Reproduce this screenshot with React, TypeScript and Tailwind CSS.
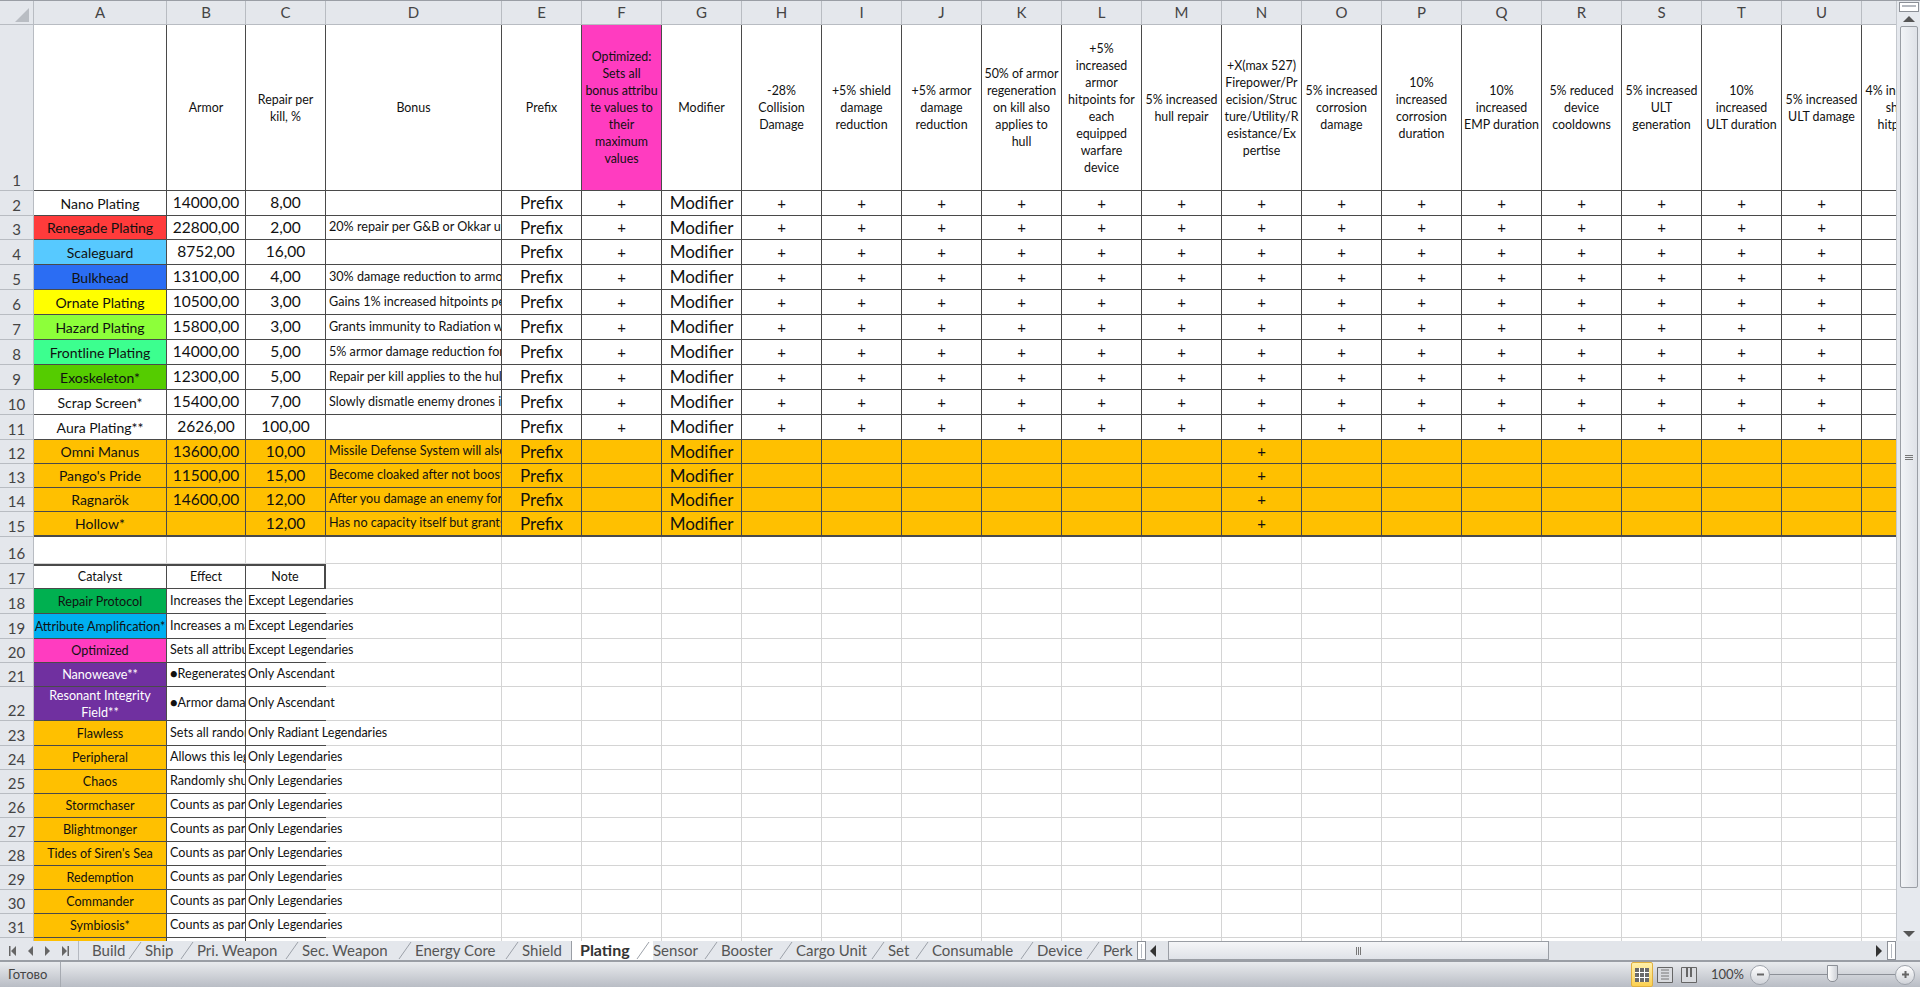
import { ReactNode } from "react";

const HEADER_LETTERS = "ABCDEFGHIJKLMNOPQRSTUV".split("");

const TOP_HEADERS = [
  "",
  "Armor",
  "Repair per\nkill, %",
  "Bonus",
  "Prefix",
  "Optimized:\nSets all\nbonus attribu\nte values to\ntheir\nmaximum\nvalues",
  "Modifier",
  "-28%\nCollision\nDamage",
  "+5% shield\ndamage\nreduction",
  "+5% armor\ndamage\nreduction",
  "50% of armor\nregeneration\non kill also\napplies to\nhull",
  "+5%\nincreased\narmor\nhitpoints for\neach\nequipped\nwarfare\ndevice",
  "5% increased\nhull repair",
  "+X(max 527)\nFirepower/Pr\necision/Struc\nture/Utility/R\nesistance/Ex\npertise",
  "5% increased\ncorrosion\ndamage",
  "10%\nincreased\ncorrosion\nduration",
  "10%\nincreased\nEMP duration",
  "5% reduced\ndevice\ncooldowns",
  "5% increased\nULT\ngeneration",
  "10%\nincreased\nULT duration",
  "5% increased\nULT damage",
  "4% increased\nshield\nhitpoints",
];

const PLATINGS = [
  { name: "Nano Plating", armor: "14000,00", repair: "8,00", bonus: "", fill: "bg-white" },
  { name: "Renegade Plating", armor: "22800,00", repair: "2,00", bonus: "20% repair per G&B or Okkar units nearby", fill: "bg-[#ff3b3b]" },
  { name: "Scaleguard", armor: "8752,00", repair: "16,00", bonus: "", fill: "bg-[#57c9ff]" },
  { name: "Bulkhead", armor: "13100,00", repair: "4,00", bonus: "30% damage reduction to armor while", fill: "bg-[#2b6df3]" },
  { name: "Ornate Plating", armor: "10500,00", repair: "3,00", bonus: "Gains 1% increased hitpoints per kill", fill: "bg-[#ffff00]" },
  { name: "Hazard Plating", armor: "15800,00", repair: "3,00", bonus: "Grants immunity to Radiation while", fill: "bg-[#8dff3a]" },
  { name: "Frontline Plating", armor: "14000,00", repair: "5,00", bonus: "5% armor damage reduction for each", fill: "bg-[#3cff8f]" },
  { name: "Exoskeleton*", armor: "12300,00", repair: "5,00", bonus: "Repair per kill applies to the hull", fill: "bg-[#55cc00]" },
  { name: "Scrap Screen*", armor: "15400,00", repair: "7,00", bonus: "Slowly dismatle enemy drones in range", fill: "bg-white" },
  { name: "Aura Plating**", armor: "2626,00", repair: "100,00", bonus: "", fill: "bg-white" },
];

const LEGENDARIES = [
  { name: "Omni Manus", armor: "13600,00", repair: "10,00", bonus: "Missile Defense System will also fire" },
  { name: "Pango's Pride", armor: "11500,00", repair: "15,00", bonus: "Become cloaked after not boosting for" },
  { name: "Ragnarök", armor: "14600,00", repair: "12,00", bonus: "After you damage an enemy for the" },
  { name: "Hollow*", armor: "", repair: "12,00", bonus: "Has no capacity itself but grants" },
];

const CATALYSTS = [
  { name: "Repair Protocol", effect: "Increases the repair", note: "Except Legendaries", fill: "bg-[#00b050]", row: 18 },
  { name: "Attribute Amplification*", effect: "Increases a main", note: "Except Legendaries", fill: "bg-[#00b0f0]", row: 19 },
  { name: "Optimized", effect: "Sets all attributes", note: "Except Legendaries", fill: "bg-[#ff3cc0]", row: 20 },
  { name: "Nanoweave**", effect: "●Regenerates hull", note: "Only Ascendant", fill: "bg-[#7030a0] text-white", row: 21 },
  { name: "Resonant Integrity\nField**", effect: "●Armor damage", note: "Only Ascendant", fill: "bg-[#7030a0] text-white", row: 22 },
  { name: "Flawless", effect: "Sets all random", note: "Only Radiant Legendaries", fill: "bg-[#ffc000]", row: 23 },
  { name: "Peripheral", effect: "Allows this legendary", note: "Only Legendaries", fill: "bg-[#ffc000]", row: 24 },
  { name: "Chaos", effect: "Randomly shuffles", note: "Only Legendaries", fill: "bg-[#ffc000]", row: 25 },
  { name: "Stormchaser", effect: "Counts as part", note: "Only Legendaries", fill: "bg-[#ffc000]", row: 26 },
  { name: "Blightmonger", effect: "Counts as part", note: "Only Legendaries", fill: "bg-[#ffc000]", row: 27 },
  { name: "Tides of Siren's Sea", effect: "Counts as part", note: "Only Legendaries", fill: "bg-[#ffc000]", row: 28 },
  { name: "Redemption", effect: "Counts as part", note: "Only Legendaries", fill: "bg-[#ffc000]", row: 29 },
  { name: "Commander", effect: "Counts as part", note: "Only Legendaries", fill: "bg-[#ffc000]", row: 30 },
  { name: "Symbiosis*", effect: "Counts as part", note: "Only Legendaries", fill: "bg-[#ffc000]", row: 31 },
  { name: "", effect: "", note: "", fill: "bg-[#ffc000]", row: 32 },
];

const TABS = [
  { label: "Build", width: "w-[53px]" },
  { label: "Ship", width: "w-[52px]" },
  { label: "Pri. Weapon", width: "w-[105px]" },
  { label: "Sec. Weapon", width: "w-[113px]" },
  { label: "Energy Core", width: "w-[107px]" },
  { label: "Shield", width: "w-[49px]", noSlash: true },
  { label: "Plating", width: "w-[82px]", active: true },
  { label: "Sensor", width: "w-[68px]" },
  { label: "Booster", width: "w-[75px]" },
  { label: "Cargo Unit", width: "w-[92px]" },
  { label: "Set", width: "w-[44px]" },
  { label: "Consumable", width: "w-[105px]" },
  { label: "Device", width: "w-[66px]" },
  { label: "Perk", width: "w-[34px]", noSlash: true },
];

const DARK = "border-r border-b border-[#4a4a4a]";
const LIGHT = "border-r border-b border-[#d4d4d4]";
const CENTER = "flex items-center justify-center whitespace-pre overflow-hidden";

function RowHeader({ n }: { n: number }) {
  return (
    <div className="flex items-end justify-center bg-[#e4e7ec] border-r border-b border-[#b8bcc2] text-[15px] leading-[20px] text-[#444]">
      {n}
    </div>
  );
}

function Blank({ count }: { count: number }) {
  return (
    <>
      {Array.from({ length: count }, (_, i) => (
        <div key={i} className={LIGHT} />
      ))}
    </>
  );
}

function Cell({ className, children }: { className?: string; children?: ReactNode }) {
  return <div className={`${CENTER} ${DARK} ${className ?? ""}`}>{children}</div>;
}

function DataRow({
  n,
  name,
  armor,
  repair,
  bonus,
  fill,
  legendary,
  last,
}: {
  n: number;
  name: string;
  armor: string;
  repair: string;
  bonus: string;
  fill: string;
  legendary?: boolean;
  last?: boolean;
}) {
  const bg = legendary ? "bg-[#ffc000]" : "bg-white";
  const edge = last ? "border-b-2 border-b-[#4a4a4a]" : "";
  return (
    <>
      <RowHeader n={n} />
      <Cell className={`${fill} ${edge} text-[14px]`}>{name}</Cell>
      <Cell className={`${bg} ${edge} text-[15.5px]`}>{armor}</Cell>
      <Cell className={`${bg} ${edge} text-[15.5px]`}>{repair}</Cell>
      <div className={`${DARK} ${bg} ${edge} flex items-center overflow-hidden whitespace-nowrap pl-[3px] text-[12.6px]`}>{bonus}</div>
      <Cell className={`${bg} ${edge} text-[17px]`}>Prefix</Cell>
      {HEADER_LETTERS.slice(5).map((letter) => {
        const isModifier = letter === "G";
        const showPlus = legendary ? letter === "N" : letter !== "V";
        return (
          <Cell key={letter} className={`${bg} ${edge} ${isModifier ? "text-[17px]" : "text-[15px]"}`}>
            {isModifier ? "Modifier" : showPlus ? "+" : ""}
          </Cell>
        );
      })}
    </>
  );
}

function NavArrow({ d }: { d: string }) {
  return (
    <svg width="9" height="10" viewBox="0 0 9 10" className="text-[#666]">
      <path d={d} fill="currentColor" />
    </svg>
  );
}

function ZoomButton({ d }: { d: string }) {
  return (
    <div className="flex h-[20px] w-[20px] items-center justify-center rounded-full border border-[#9ea3ab] bg-gradient-to-b from-white to-[#d0d3d9]">
      <svg width="11" height="11" viewBox="0 0 11 11">
        <path d={d} stroke="#666" strokeWidth="2" fill="none" />
      </svg>
    </div>
  );
}

export default function App() {
  return (
    <div className="flex h-[987px] w-[1920px] flex-col overflow-hidden bg-white font-['Lato','Open_Sans',sans-serif] text-[#111]">
      <div className="flex h-[941px] border-t border-[#9a9ea5]">
        <div className="relative flex-1 overflow-hidden">
          <div className="grid w-max grid-cols-[34px_133px_79px_80px_176px_80px_repeat(17,80px)] grid-rows-[24px_166px_25px_24px_25px_25px_25px_25px_25px_25px_25px_25px_24px_24px_24px_25px_27px_25px_25px_25px_24px_24px_34px_25px_24px_24px_24px_24px_24px_24px_24px_24px_24px]">
            {/* column headings */}
            <div className="relative bg-[#e4e7ec] border-r border-b border-[#b8bcc2]">
              <div className="absolute bottom-[2px] right-[4px] h-0 w-0 border-b-[14px] border-l-[14px] border-b-[#b9bdc3] border-l-transparent" />
            </div>
            {HEADER_LETTERS.map((letter) => (
              <div key={letter} className="flex items-center justify-center bg-[#e4e7ec] border-r border-b border-[#b8bcc2] text-[15px] text-[#444]">
                {letter}
              </div>
            ))}

            {/* row 1 */}
            <RowHeader n={1} />
            {TOP_HEADERS.map((text, i) => (
              <div
                key={i}
                className={`flex items-center justify-center overflow-hidden whitespace-pre text-center text-[12.4px] leading-[17px] ${DARK} ${i === 5 ? "bg-[#ff3cc0]" : ""}`}
              >
                {text}
              </div>
            ))}

            {/* platings */}
            {PLATINGS.map((p, i) => (
              <DataRow key={p.name} n={i + 2} {...p} />
            ))}
            {LEGENDARIES.map((p, i) => (
              <DataRow key={p.name} n={i + 12} {...p} fill="bg-[#ffc000]" legendary last={i === 3} />
            ))}

            {/* row 16 */}
            <RowHeader n={16} />
            <Blank count={22} />

            {/* row 17 */}
            <RowHeader n={17} />
            <Cell className="border-t-2 border-t-[#4a4a4a] text-[12.5px]">Catalyst</Cell>
            <Cell className="border-t-2 border-t-[#4a4a4a] text-[12.5px]">Effect</Cell>
            <Cell className="border-t-2 border-r-2 border-t-[#4a4a4a] text-[12.5px]">Note</Cell>
            <Blank count={19} />

            {/* catalysts */}
            {CATALYSTS.map((c) => (
              <div key={c.row} className="contents">
                <RowHeader n={c.row} />
                <div className={`${CENTER} ${DARK} ${c.fill} text-center text-[12.6px] leading-[17px]`}>{c.name}</div>
                <div className={`flex items-center overflow-hidden whitespace-nowrap pl-[3px] text-[12.6px] ${DARK}`}>{c.effect}</div>
                <div className="relative z-10 flex items-center whitespace-nowrap border-b border-[#4a4a4a] pl-[2px] text-[12.5px]">{c.note}</div>
                <Blank count={19} />
              </div>
            ))}
          </div>
        </div>

        {/* vertical scrollbar */}
        <div className="flex w-[24px] flex-col items-center bg-[#e6e9ee] border-l border-[#c4c8ce]">
          <div className="mt-[1px] h-[10px] w-[20px] border border-[#8c9097] bg-white">
            <div className="mx-auto mt-[2px] h-[2px] w-[14px] bg-[#b5b9c0]" />
          </div>
          <div className="mt-[4px] h-0 w-0 border-b-[6px] border-l-[6px] border-r-[6px] border-b-[#555] border-l-transparent border-r-transparent" />
          <div className="mt-[4px] flex h-[862px] w-[18px] items-center justify-center rounded-[2px] border border-[#9a9ea5] bg-gradient-to-r from-[#f2f4f7] to-[#dfe2e8]">
            <div className="flex flex-col gap-[1px]">
              <div className="h-[1px] w-[8px] bg-[#777]" />
              <div className="h-[1px] w-[8px] bg-[#777]" />
              <div className="h-[1px] w-[8px] bg-[#777]" />
            </div>
          </div>
          <div className="mt-auto mb-[4px] h-0 w-0 border-l-[6px] border-r-[6px] border-t-[6px] border-t-[#555] border-l-transparent border-r-transparent" />
        </div>
      </div>

      {/* sheet tabs + horizontal scrollbar */}
      <div className="flex h-[21px] items-stretch border-b-[2px] border-[#9a9ea5] bg-[#e4e7ec] text-[15px] leading-[18px] text-[#555]">
        <div className="flex w-[79px] items-center justify-around border-r border-[#b5b9c0] px-[4px]">
          <NavArrow d="M1 0h1.5v10H1zM8 0v10L3 5z" />
          <NavArrow d="M7 0v10L2 5z" />
          <NavArrow d="M2 0v10l5-5z" />
          <NavArrow d="M1 0v10l5-5zM6.500 0H8v10H6.500z" />
        </div>
        <div className="flex w-[1058px] shrink-0 overflow-hidden pl-[13px]">
          {TABS.map((tab) => (
            <div
              key={tab.label}
              className={`relative shrink-0 whitespace-nowrap ${tab.width} ${tab.active ? "border-l border-[#9a9ea5] bg-white pl-[8px] text-[16px] font-bold text-[#333]" : ""}`}
            >
              {tab.label}
              {!tab.noSlash && (
                <svg width="14" height="19" viewBox="0 0 14 19" className="absolute right-[3px] top-0">
                  <path d="M13 1 1 18" stroke="#9ca1a9" fill="none" />
                </svg>
              )}
            </div>
          ))}
        </div>
        <div className="flex w-[9px] items-center justify-center border border-[#8c9097] bg-white">
          <div className="h-[14px] w-[1px] bg-[#b5b9c0]" />
        </div>
        <div className="flex flex-1 items-center bg-[#e2e5ea] pl-[4px]">
          <div className="h-0 w-0 border-b-[6px] border-r-[6px] border-t-[6px] border-b-transparent border-r-[#333] border-t-transparent" />
          <div className="ml-[12px] flex h-[19px] w-[381px] items-center justify-center border border-[#9a9ea5] bg-gradient-to-b from-[#f5f6f8] to-[#dfe2e8]">
            <div className="flex gap-[1px]">
              <div className="h-[8px] w-[1px] bg-[#777]" />
              <div className="h-[8px] w-[1px] bg-[#777]" />
              <div className="h-[8px] w-[1px] bg-[#777]" />
            </div>
          </div>
          <div className="ml-auto mr-[5px] h-0 w-0 border-b-[6px] border-l-[6px] border-t-[6px] border-b-transparent border-l-[#333] border-t-transparent" />
          <div className="flex h-[19px] w-[9px] items-center justify-center border border-[#8c9097] bg-white">
            <div className="h-[14px] w-[1px] bg-[#b5b9c0]" />
          </div>
          <div className="w-[24px]" />
        </div>
      </div>

      {/* status bar */}
      <div className="flex h-[25px] items-center bg-gradient-to-b from-[#e9ebee] to-[#b9bdc5] text-[13px] text-[#444]">
        <div className="flex h-full w-[61px] items-center border-r border-[#a6aab1] pl-[8px]">Готово</div>
        <div className="ml-auto flex h-full items-center">
          <div className="flex h-full w-[22px] items-center justify-center rounded-[2px] border border-[#e0b040] bg-gradient-to-b from-[#fff0a8] to-[#fbd050]">
            <svg width="14" height="14" viewBox="0 0 14 14">
              <path d="M0 0h14v14H0z" fill="#6a6a6a" />
              <path d="M4.500 0v14M9.500 0v14M0 4.500h14M0 9.500h14" stroke="#fff" strokeWidth="1" />
            </svg>
          </div>
          <div className="ml-[3px] flex w-[17px] items-center justify-center">
            <svg width="16" height="16" viewBox="0 0 16 16">
              <path d="M.5.500h15v15H.5z" fill="#d9dbdf" stroke="#666" />
              <path d="M4 3h8M4 6h8M4 9h8M4 12h8" stroke="#777" />
            </svg>
          </div>
          <div className="ml-[7px] flex w-[17px] items-center justify-center">
            <svg width="16" height="16" viewBox="0 0 16 16">
              <path d="M.5.500h15v15H.5z" fill="#d9dbdf" stroke="#666" />
              <path d="M5 1v9h2V1zM9 1v9h2V1z" fill="#666" />
            </svg>
          </div>
          <span className="ml-[14px] w-[30px]">100%</span>
          <div className="ml-[9px]">
            <ZoomButton d="M2 5.500h7" />
          </div>
          <div className="relative h-[1px] w-[125px] bg-[#8c9097]">
            <div className="absolute -top-[9px] left-[57px] h-[17px] w-[11px] rounded-b-[5px] border border-[#8c9097] bg-gradient-to-r from-white to-[#cfd2d8]" />
          </div>
          <div className="mr-[5px]">
            <ZoomButton d="M2 5.500h7M5.500 2v7" />
          </div>
        </div>
      </div>
    </div>
  );
}
